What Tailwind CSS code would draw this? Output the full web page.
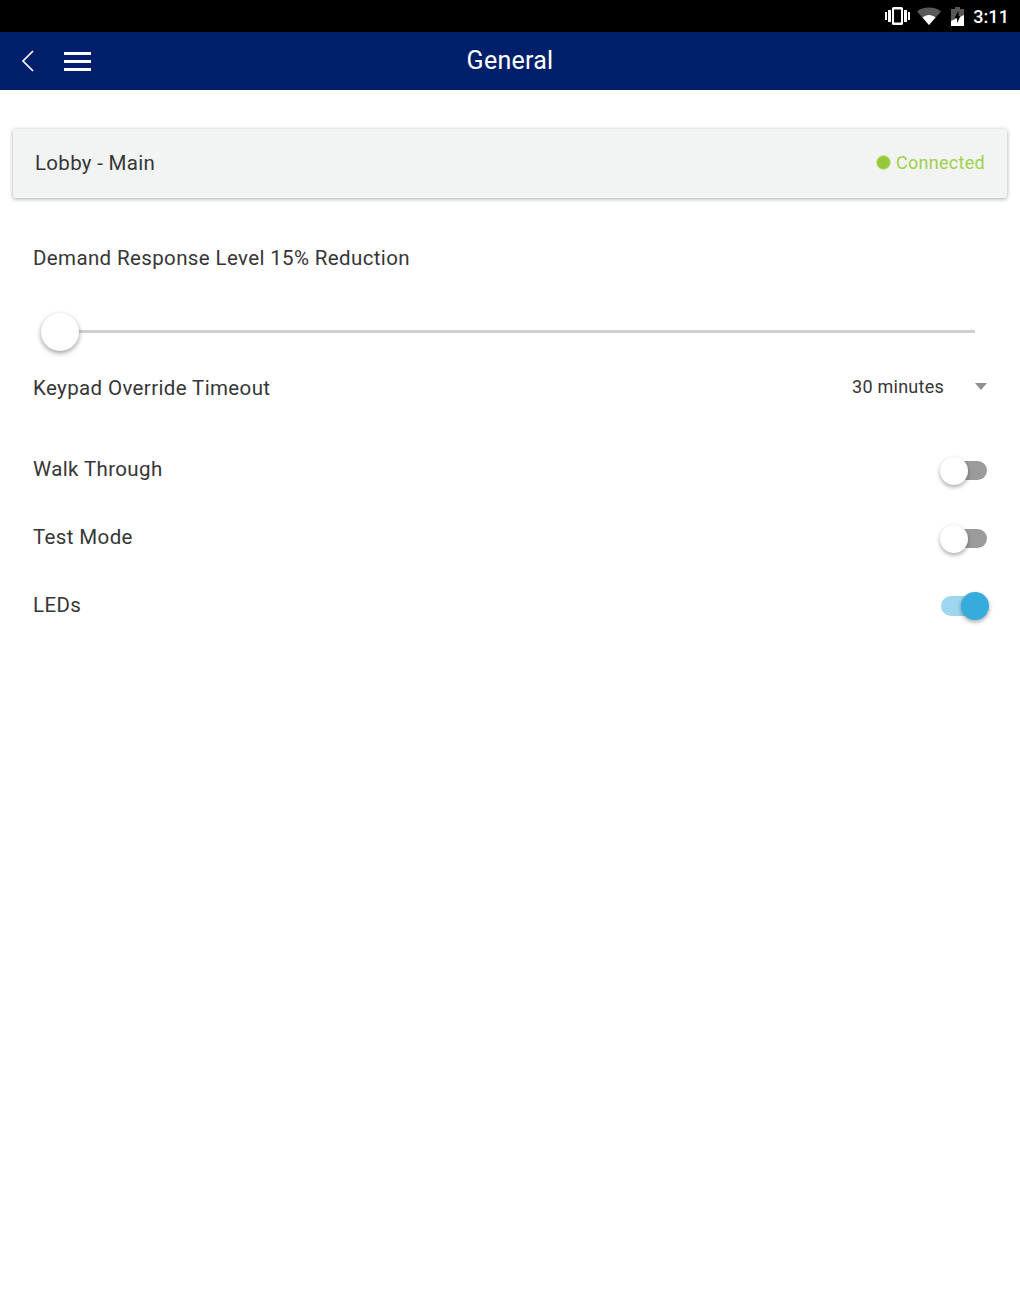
<!DOCTYPE html>
<html lang="en">
<head>
  <meta charset="UTF-8" />
  <meta name="viewport" content="width=device-width, initial-scale=1.0"/>
  <title>General</title>
  <script src="https://cdn.jsdelivr.net/npm/@tailwindcss/browser@4"></script>
</head>
<body class="bg-white text-[#363636] font-['Roboto',sans-serif]">
  <div class="w-[1020px] h-[1296px] overflow-hidden">

    <!-- status bar -->
    <div class="h-[32px] bg-black flex items-center justify-end pr-[11px] text-white">
      <svg width="25" height="18" viewBox="0 0 25 18" class="mr-[7px]" fill="#fff">
        <rect x="0" y="5" width="2" height="8" />
        <rect x="3" y="3" width="3" height="12" />
        <path fill-rule="evenodd" d="M7 1.5A1.5 1.5 0 0 1 8.5 0h8A1.5 1.5 0 0 1 18 1.5v15a1.5 1.5 0 0 1-1.5 1.5h-8A1.5 1.5 0 0 1 7 16.500zM9 2.500v13h7v-13z" />
        <rect x="19" y="3" width="3" height="12" />
        <rect x="23" y="5" width="2" height="8" />
      </svg>
      <svg width="24" height="18" viewBox="0 0 24 18" class="mr-[10px]">
        <path d="M0 4.500C3 2 7 0.500 12 0.500s9 1.500 12 4L12 18z" fill="#fff" fill-opacity="0.35" />
        <path d="M5.500 10.500C7.500 9 9.500 8 12 8s4.500 1 6.500 2.500L12 18z" fill="#fff" />
      </svg>
      <svg width="13" height="20" viewBox="0 0 13 20" class="mr-[9px]">
        <path d="M4 1h5v2h4v17H0V3h4z" fill="#fff" fill-opacity="0.35" />
        <path d="M0 15L13 9v11H0z" fill="#fff" />
        <path d="M7.500 4.500L3.500 12h2.500v5l3.500-7H7.500z" fill="#000" />
      </svg>
      <span class="text-[18px] font-medium leading-none tracking-[0.1px] mt-[2px]">3:11</span>
    </div>

    <!-- app bar -->
    <div class="relative h-[58px] bg-[#001f6b] flex items-center text-white">
      <svg width="14" height="22" viewBox="0 0 14 22" class="ml-[21px]" fill="none" stroke="#fff" stroke-width="1.700">
        <path d="M12 1 L2 11 L12 21" />
      </svg>
      <div class="ml-[29px] w-[27px] flex flex-col gap-[5px]">
        <div class="h-[3px] bg-white"></div>
        <div class="h-[3px] bg-white"></div>
        <div class="h-[3px] bg-white"></div>
      </div>
      <div class="absolute inset-0 flex items-center justify-center text-[25px] tracking-[0.25px]">General</div>
    </div>

    <div class="px-[13px] pt-[39px]">
      <!-- device card -->
      <div class="h-[69px] bg-[#f2f4f4] rounded-[2px] shadow-[0_1px_4px_rgba(0,0,0,0.35)] flex items-center justify-between pl-[22px] pr-[22px]">
        <span class="text-[20.500px] tracking-[0.3px]">Lobby - Main</span>
        <div class="flex items-center gap-[5px] text-[#a0d04a] text-[18px] tracking-[0.3px] -mt-[3px]">
          <span class="w-[15px] h-[15px] rounded-full bg-[#95c93a] border-[1.500px] border-[#d3e9a8]"></span>
          Connected
        </div>
      </div>
    </div>

    <div class="px-[33px]">
      <div class="mt-[47px] text-[20.500px] leading-[26px] tracking-[0.37px]">Demand Response Level 15% Reduction</div>

      <!-- slider -->
      <div class="relative mt-[41px] h-[40px] flex items-center">
        <div class="ml-[27px] w-[915px] h-[3px] -mt-[1px] bg-[#d0d0d0]"></div>
        <div class="absolute left-[8px] top-[1px] w-[38px] h-[38px] rounded-full bg-white shadow-[0_2px_5px_rgba(0,0,0,0.4)]"></div>
      </div>

      <!-- timeout -->
      <div class="mt-[23px] flex items-center justify-between h-[26px]">
        <span class="text-[20.500px] tracking-[0.37px]">Keypad Override Timeout</span>
        <div class="flex items-center -mt-[3px]">
          <span class="text-[18px] tracking-[0.25px]">30 minutes</span>
          <span class="ml-[31px] w-0 h-0 border-x-[6.500px] border-x-transparent border-t-[7px] border-t-[#8f8f8f]"></span>
        </div>
      </div>

      <!-- toggles -->
      <div class="mt-[55px] flex flex-col gap-[41px]">
        <div class="flex items-center justify-between h-[27px]">
          <span class="text-[20.500px] tracking-[0.37px]">Walk Through</span>
          <div class="relative w-[46px] h-[19px] mt-[2px] rounded-full bg-[#9b9b9b]">
            <div class="absolute -left-[1px] -top-[4.500px] w-[28px] h-[28px] rounded-full bg-white shadow-[0_2px_4px_rgba(0,0,0,0.35)]"></div>
          </div>
        </div>
        <div class="flex items-center justify-between h-[27px]">
          <span class="text-[20.500px] tracking-[0.37px]">Test Mode</span>
          <div class="relative w-[46px] h-[19px] mt-[2px] rounded-full bg-[#9b9b9b]">
            <div class="absolute -left-[1px] -top-[4.500px] w-[28px] h-[28px] rounded-full bg-white shadow-[0_2px_4px_rgba(0,0,0,0.35)]"></div>
          </div>
        </div>
        <div class="flex items-center justify-between h-[27px]">
          <span class="text-[20.500px] tracking-[0.37px]">LEDs</span>
          <div class="relative w-[46px] h-[20px] rounded-full bg-[#9dd6ee]">
            <div class="absolute -right-[2px] -top-[4px] w-[28px] h-[28px] rounded-full bg-[#36acdc] shadow-[0_2px_4px_rgba(0,0,0,0.35)]"></div>
          </div>
        </div>
      </div>
    </div>

  </div>
</body>
</html>
